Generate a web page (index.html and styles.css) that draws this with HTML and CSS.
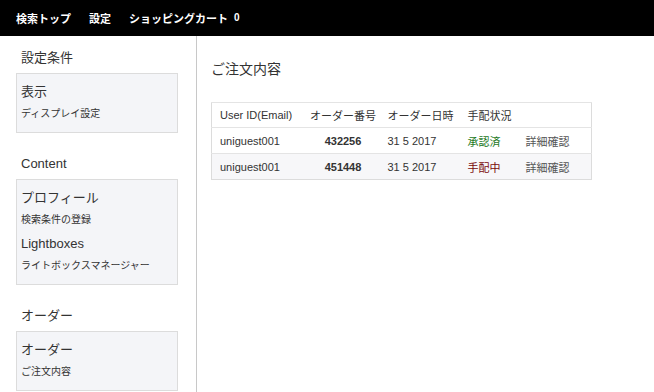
FILE: index.html
```html
<!DOCTYPE html>
<html lang="ja">
<head>
    <meta charset="UTF-8">
    <meta name="viewport" content="width=device-width, initial-scale=1.0">
    <title>ご注文内容</title>
    <link rel="stylesheet" href="styles.css">
</head>
<body>
    <div class="topbar">
        <a href="#">検索トップ</a>
        <a href="#">設定</a>
        <a href="#">ショッピングカート <sup class="cart-count">0</sup></a>
    </div>
    <div class="layout">
        <div class="sidebar">
            <h3 class="side-title first">設定条件</h3>
            <div class="side-box">
                <div class="item-title">表示</div>
                <div class="item-sub">ディスプレイ設定</div>
            </div>
            <h3 class="side-title">Content</h3>
            <div class="side-box">
                <div class="item-title">プロフィール</div>
                <div class="item-sub">検索条件の登録</div>
                <div class="item-title">Lightboxes</div>
                <div class="item-sub">ライトボックスマネージャー</div>
            </div>
            <h3 class="side-title">オーダー</h3>
            <div class="side-box">
                <div class="item-title">オーダー</div>
                <div class="item-sub">ご注文内容</div>
            </div>
        </div>
        <div class="main">
            <h2 class="page-title">ご注文内容</h2>
            <table class="orders">
                <colgroup>
                    <col class="c-user">
                    <col class="c-no">
                    <col class="c-date">
                    <col class="c-status">
                    <col class="c-detail">
                </colgroup>
                <tr>
                    <th>User ID(Email)</th>
                    <th class="num">オーダー番号</th>
                    <th>オーダー日時</th>
                    <th>手配状況</th>
                    <th></th>
                </tr>
                <tr>
                    <td>uniguest001</td>
                    <td class="num"><b>432256</b></td>
                    <td>31 5 2017</td>
                    <td class="ok">承認済</td>
                    <td class="detail">詳細確認</td>
                </tr>
                <tr class="alt">
                    <td>uniguest001</td>
                    <td class="num"><b>451448</b></td>
                    <td>31 5 2017</td>
                    <td class="wait">手配中</td>
                    <td class="detail">詳細確認</td>
                </tr>
            </table>
        </div>
    </div>
</body>
</html>
```

FILE: styles.css
```css
* {
    margin: 0;
    padding: 0;
    box-sizing: border-box;
}
html, body {
    width: 100%;
    height: 100%;
    overflow: hidden;
}
body {
    font-family: "Liberation Sans", Arial, "Noto Sans CJK JP", sans-serif;
    color: #333;
    background-color: #fff;
    display: flex;
    flex-direction: column;
}
.topbar {
    height: 36px;
    background-color: #000;
    display: flex;
    align-items: center;
    padding-left: 16px;
    gap: 18px;
}
.topbar a {
    color: #fff;
    text-decoration: none;
    font-size: 11px;
    font-weight: bold;
}
.cart-count {
    font-size: 10px;
    vertical-align: 2px;
    margin-left: 3px;
}
.layout {
    flex: 1;
    display: flex;
}
.sidebar {
    width: 197px;
    border-right: 1px solid #c8c8c8;
    padding: 12px 0 0 16px;
}
.side-title {
    font-size: 13px;
    font-weight: normal;
    line-height: 20px;
    padding-left: 5px;
    margin: 21px 0 5px;
}
.side-title.first {
    margin-top: 0;
}
.side-box {
    width: 162px;
    background-color: #f4f5f8;
    border: 1px solid #dcdcdc;
    padding: 8px 0 8px 4px;
}
.item-title {
    font-size: 13px;
    line-height: 20px;
    margin-top: 4px;
}
.item-title:first-child {
    margin-top: 0;
}
.item-sub {
    font-size: 10px;
    line-height: 20px;
    margin-top: 2px;
}
.main {
    flex: 1;
    padding: 23px 0 0 14px;
}
.page-title {
    font-size: 14px;
    font-weight: normal;
    line-height: 20px;
    margin-bottom: 23px;
}
.orders {
    width: 381px;
    table-layout: fixed;
    border-collapse: collapse;
    border: 1px solid #dcdcdc;
    font-size: 11px;
}
.c-user { width: 87px; }
.c-no { width: 81px; }
.c-date { width: 80px; }
.c-status { width: 58px; }
.orders th, .orders td {
    height: 26px;
    padding: 0 0 0 8px;
    text-align: left;
    font-weight: normal;
    border-top: 1px solid #e4e4e4;
    white-space: nowrap;
}
.orders th {
    height: 25px;
}
.orders .num {
    text-align: center;
    padding: 0 0 0 8px;
}
.orders .alt td {
    background-color: #f7f7f9;
}
.ok {
    color: #1c7a1c;
}
.wait {
    color: #7a0a0a;
}
.detail {
    color: #555;
}
```
